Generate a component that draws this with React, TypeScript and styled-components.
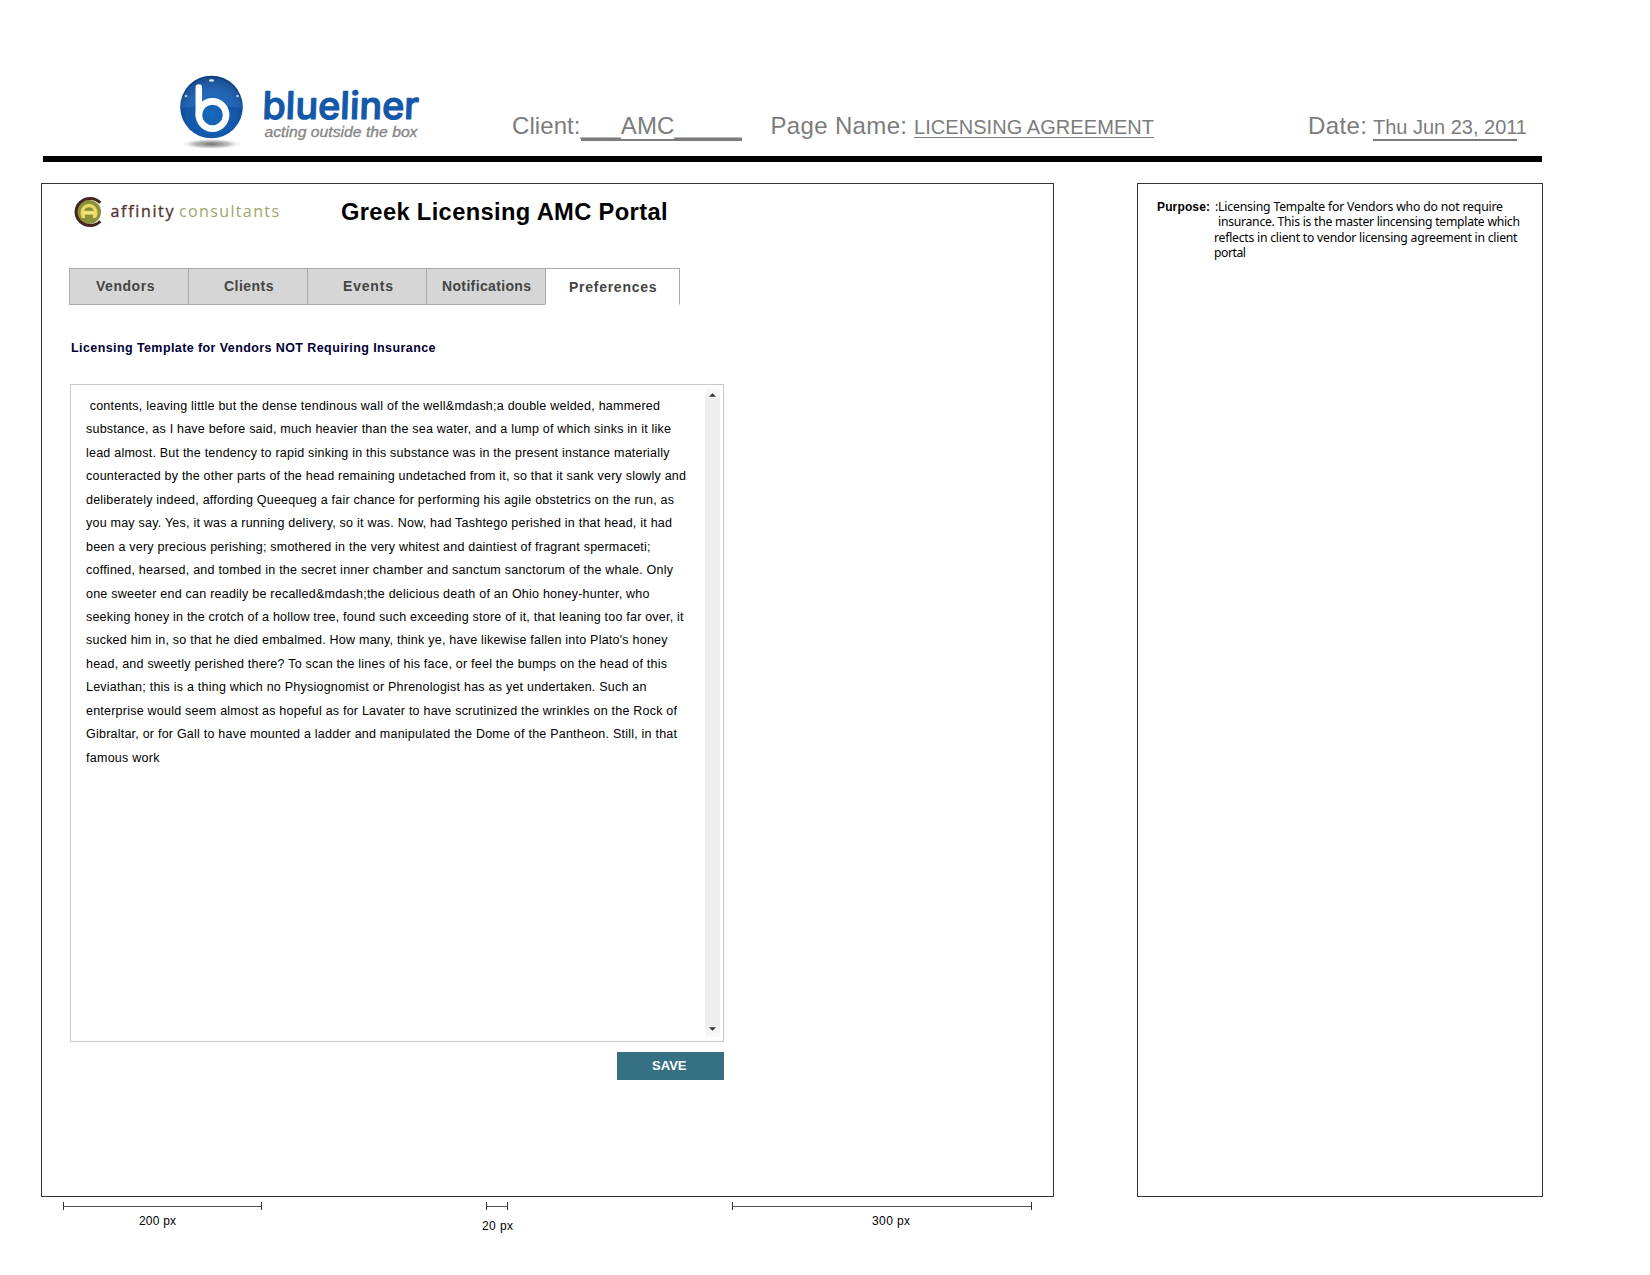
import React, { useLayoutEffect, useRef, useState } from 'react';
import styled, { createGlobalStyle } from 'styled-components';

const GlobalStyle = createGlobalStyle`
  body { margin: 0; background: #fff; }
  * { box-sizing: border-box; }
`;

const sans = '"Liberation Sans", Arial, Helvetica, sans-serif';

const Page = styled.div`
  width: 1650px;
  height: 1275px;
  overflow: hidden;
  background: #fff;
  font-family: ${sans};
  color: #000;
`;

const Header = styled.header`
  display: flex;
  height: 162px;
  width: 1499px;
  margin-left: 43px;
  border-bottom: 6px solid #000;
`;

const HeaderLogo = styled.svg`
  flex: none;
  width: 300px;
  height: 90px;
  margin: 66px 0 0 127px;
`;

const Fields = styled.div`
  display: flex;
  align-items: baseline;
  margin: 111px 0 0 42px;
  height: 36px;
  color: #7c7c7c;
`;

const Line = styled.span<{ $size: number; $lh: number; $w: number; $ml?: number; $bold?: boolean; $rule?: number; $family?: string }>`
  display: block;
  flex: none;
  white-space: pre;
  width: ${p => p.$w}px;
  margin-left: ${p => p.$ml ?? 0}px;
  font-family: ${p => p.$family ?? sans};
  font-size: ${p => p.$size}px;
  line-height: ${p => p.$lh}px;
  font-weight: ${p => (p.$bold ? 700 : 400)};
  border-bottom: ${p => (p.$rule ? `${p.$rule}px solid #7c7c7c` : 'none')};
`;

interface TextProps {
  children: string;
  size: number;
  lh: number;
  width: number;
  ink?: number;
  ml?: number;
  bold?: boolean;
  rule?: number;
  family?: string;
}

/* A single line tracked so that its letters span the given measure. */
function Text({ children, size, lh, width, ink, ml, bold, rule, family }: TextProps) {
  const ref = useRef<HTMLSpanElement>(null);
  const [tracking, setTracking] = useState(0);
  useLayoutEffect(() => {
    if (!ref.current) return;
    const natural = ref.current.getBoundingClientRect().width;
    setTracking(((ink ?? width) - natural) / (children.length - 1));
  }, []);
  return (
    <Line $size={size} $lh={lh} $w={width} $ml={ml} $bold={bold} $rule={rule} $family={family}>
      <span ref={ref} style={{ letterSpacing: tracking }}>{children}</span>
    </Line>
  );
}

const Columns = styled.main`
  display: flex;
  gap: 83px;
  margin: 21px 0 0 41px;
`;

const Portal = styled.section`
  width: 1013px;
  height: 1014px;
  border: 1px solid #333;
  padding-left: 28px;
`;

const Notes = styled.aside`
  display: flex;
  width: 406px;
  height: 1014px;
  border: 1px solid #333;
  padding: 16px 0 0 19px;
`;

const NoteBody = styled.div`
  margin: -1px 0 0 4px;
`;

const Brand = styled.div`
  display: flex;
  height: 84px;
`;

const BrandLogo = styled.svg`
  flex: none;
  width: 220px;
  height: 44px;
  margin-top: 5px;
`;

const Title = styled.div`
  margin: 13px 0 0 51px;
`;

const Tabs = styled.nav`
  display: flex;
  margin-left: -1px;
  width: 612px;
`;

const Tab = styled.div<{ $w: number; $pad: number; $active?: boolean }>`
  width: ${p => p.$w}px;
  height: 37px;
  padding: ${p => (p.$active ? 9 : 8)}px 0 0 ${p => p.$pad}px;
  color: #444;
  background: ${p => (p.$active ? '#fff' : '#d6d6d6')};
  border: 1px solid #aaa;
  border-right-width: ${p => (p.$active ? 1 : 0)}px;
  border-bottom-color: ${p => (p.$active ? '#fff' : '#aaa')};
`;

const Heading = styled.div`
  margin: 33px 0 0 1px;
  color: #000033;
`;

const Editor = styled.div`
  display: flex;
  justify-content: space-between;
  width: 654px;
  height: 658px;
  margin-top: 26px;
  border: 1px solid #c8c8c8;
  padding: 3px 3px 4px 15px;
`;

const Copy = styled.div`
  padding-top: 7px;
`;

const Scrollbar = styled.div`
  display: flex;
  flex-direction: column;
  justify-content: space-between;
  align-items: center;
  width: 15px;
  padding: 5px 1px 6px 0;
  background: linear-gradient(#fafafa, #eee 12px, #eee calc(100% - 12px), #fafafa);
`;

const Arrow = styled.svg`
  width: 7px;
  height: 4px;
  fill: #333;
`;

const Save = styled.button`
  display: block;
  width: 107px;
  height: 28px;
  margin: 10px 0 0 547px;
  padding: 0 0 0 35px;
  border: 0;
  text-align: left;
  color: #fff;
  background: #357083;
`;

const Rulers = styled.footer`
  display: flex;
  margin: 5px 0 0 63px;
`;

const Ruler = styled.div<{ $w: number; $ml?: number }>`
  width: ${p => p.$w}px;
  margin-left: ${p => p.$ml ?? 0}px;
`;

const Bar = styled.div`
  height: 8px;
  border: solid #333;
  border-width: 0 1px;
  margin-bottom: 1px;
  background: linear-gradient(#555, #555) 0 4px / 100% 1px no-repeat;
`;

const copy: [string, number][] = [
  [' contents, leaving little but the dense tendinous wall of the well&mdash;a double welded, hammered', 574],
  ['substance, as I have before said, much heavier than the sea water, and a lump of which sinks in it like', 585],
  ['lead almost. But the tendency to rapid sinking in this substance was in the present instance materially', 583.5],
  ['counteracted by the other parts of the head remaining undetached from it, so that it sank very slowly and', 600],
  ['deliberately indeed, affording Queequeg a fair chance for performing his agile obstetrics on the run, as', 588],
  ['you may say. Yes, it was a running delivery, so it was. Now, had Tashtego perished in that head, it had', 586],
  ['been a very precious perishing; smothered in the very whitest and daintiest of fragrant spermaceti;', 564.5],
  ['coffined, hearsed, and tombed in the secret inner chamber and sanctum sanctorum of the whale. Only', 587],
  ['one sweeter end can readily be recalled&mdash;the delicious death of an Ohio honey-hunter, who', 563.5],
  ['seeking honey in the crotch of a hollow tree, found such exceeding store of it, that leaning too far over, it', 597.5],
  ['sucked him in, so that he died embalmed. How many, think ye, have likewise fallen into Plato\'s honey', 581.5],
  ['head, and sweetly perished there? To scan the lines of his face, or feel the bumps on the head of this', 581],
  ['Leviathan; this is a thing which no Physiognomist or Phrenologist has as yet undertaken. Such an', 560.5],
  ['enterprise would seem almost as hopeful as for Lavater to have scrutinized the wrinkles on the Rock of', 591],
  ['Gibraltar, or for Gall to have mounted a ladder and manipulated the Dome of the Pantheon. Still, in that', 591],
  ['famous work', 73.5],
];

const notes: [string, number, number][] = [
  [':Licensing Tempalte for Vendors who do not require', 288, 1],
  ['insurance. This is the master lincensing template which', 302, 4],
  ['reflects in client to vendor licensing agreement in client', 303.5, 0],
  ['portal', 32, 0],
];

function BluelinerLogo() {
  return (
    <HeaderLogo viewBox="170 66 300 90">
      <defs>
        <radialGradient id="ball" cx="50%" cy="62%" r="58%">
          <stop offset="0" stopColor="#1768bd" />
          <stop offset="0.7" stopColor="#1257a8" />
          <stop offset="1" stopColor="#0c3d80" />
        </radialGradient>
        <radialGradient id="shade">
          <stop offset="0" stopColor="#555" stopOpacity="0.85" />
          <stop offset="0.55" stopColor="#888" stopOpacity="0.55" />
          <stop offset="1" stopColor="#fff" stopOpacity="0" />
        </radialGradient>
      </defs>
      <ellipse cx="211.5" cy="144" rx="32" ry="5.5" fill="url(#shade)" />
      <circle cx="211.5" cy="107" r="31.3" fill="url(#ball)" />
      <path d="M181 108a30.500 30.500 0 0 1 61 0q-30-5-61 0z" fill="#5b97d5" opacity="0.22" />
      <ellipse cx="211.500" cy="80.500" rx="2.500" ry="1.200" fill="#d9ebff" />
      <circle cx="186" cy="96" r="1.300" fill="#a9cdf5" />
      <circle cx="237.500" cy="96" r="1.300" fill="#a9cdf5" />
      <path d="M198.800 87.500v28" stroke="#fff" strokeWidth="6.500" strokeLinecap="round" fill="none" />
      <circle cx="212.500" cy="115" r="13.600" fill="none" stroke="#fff" strokeWidth="6.600" />
      <text transform="translate(262 119.200) skewX(-2)" fontFamily="Inter, sans-serif" fontSize="38" fontWeight="500" fill="#1459a9"
        stroke="#1459a9" strokeWidth="1.200" strokeLinejoin="round" textLength="156.500" lengthAdjust="spacingAndGlyphs">blueliner</text>
      <text x="264.500" y="136.700" fontFamily={sans} fontSize="14" fontStyle="italic" fill="#858585" stroke="#858585"
        strokeWidth="0.300" textLength="153" lengthAdjust="spacingAndGlyphs">acting outside the box</text>
    </HeaderLogo>
  );
}

function AffinityLogo() {
  return (
    <BrandLogo viewBox="70.500 188.500 220 44">
      <circle cx="89.500" cy="211.500" r="12" fill="#8b913b" />
      <path d="M100.800 202.300A14 13.500 0 1 0 100.800 220.700" fill="none" stroke="#47261d" strokeWidth="3" />
      <path d="M82.300 217.500q-1.300-2.500-1.300-5.500a8.500 8.500 0 0 1 17 0q0 3-1.300 5.500h-3.200v-3.300h-8v3.300z" fill="#edda65" />
      <path d="M84.800 210.300a4.700 3.600 0 0 1 9.400 0z" fill="#858b38" />
      <path d="M84 212.300h11" stroke="#f6ec9a" strokeWidth="1.500" />
      <text x="111" y="216.300" fontFamily={'"Open Sans", sans-serif'} fontSize="16" fill="#543630" stroke="#543630"
        strokeWidth="0.350" textLength="63" lengthAdjust="spacing">
        <tspan fontVariantLigatures="none" style={{ fontVariantLigatures: 'none' }}>affinity</tspan>
      </text>
      <text x="179.500" y="216.300" fontFamily={'"Open Sans", sans-serif'} fontSize="16" fill="#9da568"
        textLength="100" lengthAdjust="spacing">consultants</text>
    </BrandLogo>
  );
}

export default function App() {
  return (
    <Page>
      <GlobalStyle />
      <Header>
        <BluelinerLogo />
        <Fields>
          <Text size={24} lh={30} width={68.5}>Client:</Text>
          <Text size={24} lh={27} width={161} rule={2}>___AMC_____</Text>
          <Text size={24} lh={30} width={136.5} ml={29}>Page Name:</Text>
          <Text size={20} lh={19} width={240} ml={7} rule={1}>LICENSING AGREEMENT</Text>
          <Text size={24} lh={30} width={59} ml={154}>Date:</Text>
          <Text size={20} lh={23} width={144} ink={154} ml={6} rule={2}>Thu Jun 23, 2011</Text>
        </Fields>
      </Header>
      <Columns>
        <Portal>
          <Brand>
            <AffinityLogo />
            <Title><Text size={23.7} lh={30} width={326.5} bold>Greek Licensing AMC Portal</Text></Title>
          </Brand>
          <Tabs>
            <Tab $w={119} $pad={26}><Text size={14} lh={18} width={58.5} bold>Vendors</Text></Tab>
            <Tab $w={119} $pad={35}><Text size={14} lh={18} width={49.5} bold>Clients</Text></Tab>
            <Tab $w={119} $pad={35}><Text size={14} lh={18} width={50} bold>Events</Text></Tab>
            <Tab $w={119} $pad={15}><Text size={14} lh={18} width={89} bold>Notifications</Text></Tab>
            <Tab $w={135} $pad={23} $active><Text size={14} lh={18} width={87.5} bold>Preferences</Text></Tab>
          </Tabs>
          <Heading>
            <Text size={12.5} lh={20} width={364.5} bold>Licensing Template for Vendors NOT Requiring Insurance</Text>
          </Heading>
          <Editor>
            <Copy>
              {copy.map(([line, w]) => <Text key={line} size={12.5} lh={23.43} width={w}>{line}</Text>)}
            </Copy>
            <Scrollbar>
              <Arrow viewBox="0 0 8 4"><path d="M4 0l4 4H0z" /></Arrow>
              <Arrow viewBox="0 0 8 4"><path d="M0 0h8L4 4z" /></Arrow>
            </Scrollbar>
          </Editor>
          <Save><Text size={13} lh={28} width={34.5} bold>SAVE</Text></Save>
        </Portal>
        <Notes>
          <Text size={12} lh={15.4} width={53} bold>Purpose:</Text>
          <NoteBody>
            {notes.map(([line, w, ml]) => (
              <Text key={line} size={12.2} lh={15.4} width={w} ml={ml} family={'"Noto Sans", "Open Sans", sans-serif'}>{line}</Text>
            ))}
          </NoteBody>
        </Notes>
      </Columns>
      <Rulers>
        <Ruler $w={199}><Bar /><Text size={12} lh={21} width={37} ml={76}>200 px</Text></Ruler>
        <Ruler $w={22} $ml={224}><Bar /><Text size={12} lh={31} width={31} ml={-4}>20 px</Text></Ruler>
        <Ruler $w={300} $ml={224}><Bar /><Text size={12} lh={21} width={38} ml={140}>300 px</Text></Ruler>
      </Rulers>
    </Page>
  );
}
